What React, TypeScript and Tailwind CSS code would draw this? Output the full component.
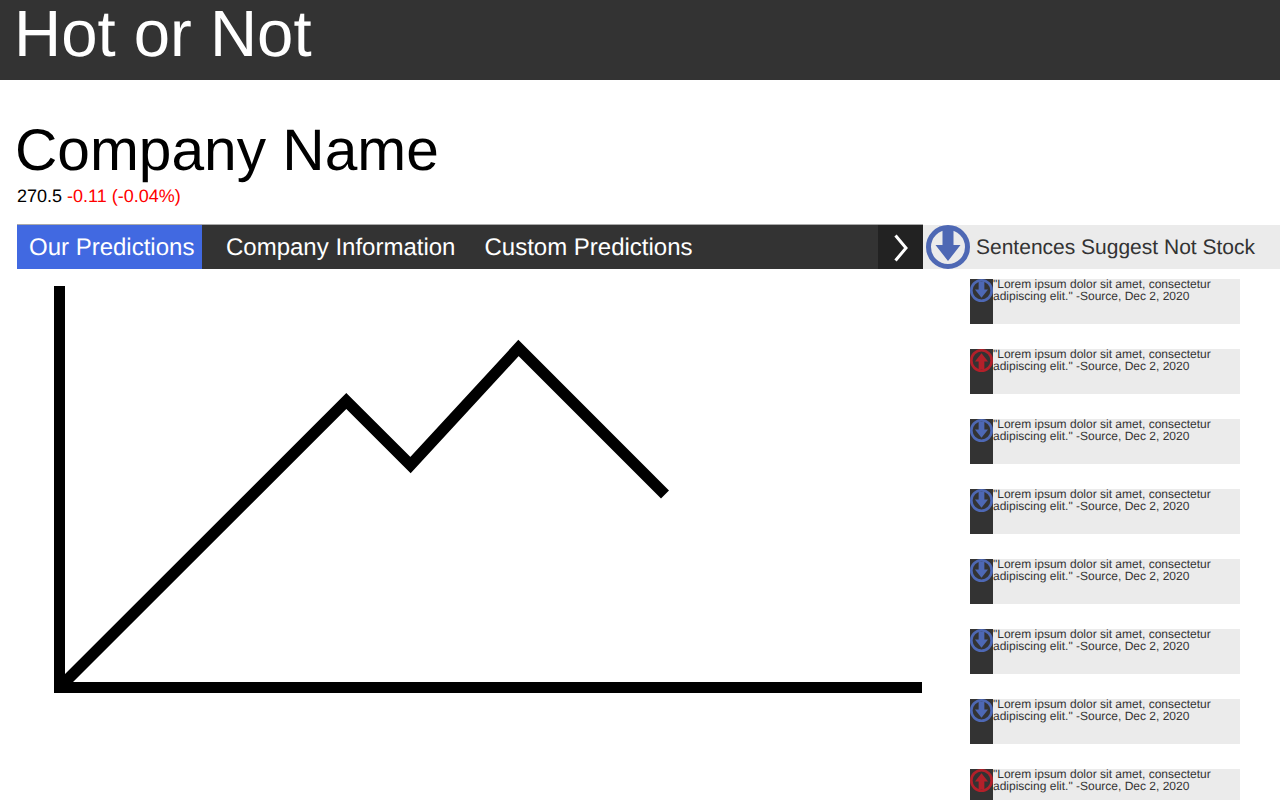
type ArrowProps = {
  up?: boolean;
  className: string;
};

function ArrowCircle({ up, className }: ArrowProps) {
  return (
    <svg viewBox="0 0 44 44" className={className}>
      <circle cx="22" cy="22" r="19.5" fill="none" stroke={up ? '#b3202a' : '#4e68b4'} strokeWidth="5" />
      <path
        d={up ? 'M22 8 L34.5 24 L27.5 24 L27.5 39 L16.5 39 L16.5 24 L9.5 24 Z' : 'M22 36 L34.5 20 L27.5 20 L27.5 5 L16.5 5 L16.5 20 L9.5 20 Z'}
        fill={up ? '#b3202a' : '#4e68b4'}
      />
    </svg>
  );
}

const sentences = [false, true, false, false, false, false, false, true];

function Sentence({ up }: { up: boolean }) {
  return (
    <div className="flex h-[45px] w-[270px] shrink-0 bg-[#ebebeb]">
      <div className="h-full w-[23px] shrink-0 bg-[#333333]">
        <ArrowCircle up={up} className="h-[23px] w-[23px]" />
      </div>
      <p className="-mt-px text-[12px] leading-[12px] text-[#333333]">
        "Lorem ipsum dolor sit amet, consectetur adipiscing elit." -Source, Dec 2, 2020
      </p>
    </div>
  );
}

export default function App() {
  return (
    <div className="h-[800px] overflow-hidden bg-white font-['Liberation_Sans',Arial,sans-serif] [text-rendering:geometricPrecision]">
      <header className="flex h-20 bg-[#333333] pl-[14px]">
        <h1 className="text-[65.3px] leading-[68px] text-white">Hot or Not</h1>
      </header>
      <div className="pl-[15px] pt-[39px]">
        <h2 className="text-[58.67px] leading-[64px] text-black">Company Name</h2>
        <p className="mt-[3px] pl-[2px] text-[18px] leading-[20px] text-black">
          270.5 <span className="text-[#ff0000]">-0.11 (-0.04%)</span>
        </p>
      </div>
      <div className="mt-[18px] flex">
        <div className="ml-[17px] w-[906px] shrink-0">
          <nav className="flex h-[45px] items-center border-t border-[#aaaaaa] bg-[#333333] pt-[2px] text-[24px] leading-none text-white">
            <a className="-mt-[2px] flex h-[44px] w-[185px] items-center bg-[#4169e1] pl-[12px] pt-[2px]">Our Predictions</a>
            <a className="ml-[24px]">Company Information</a>
            <a className="ml-[29px]">Custom Predictions</a>
            <button className="-mt-[2px] ml-auto flex h-[44px] w-[45px] items-center justify-center bg-[#222222] pt-[2px]">
              <svg viewBox="0 0 14 28" className="h-[28px] w-[14px]">
                <path d="M1.5 1.5 L12 14 L1.5 26.5" fill="none" stroke="#ffffff" strokeWidth="3" />
              </svg>
            </button>
          </nav>
          <svg viewBox="0 0 906 430" className="mt-[17px] h-[430px] w-[906px]">
            <path d="M42.5 0 V407 M37 401.5 H905" fill="none" stroke="#000000" strokeWidth="11" />
            <path d="M42 402 L329.3 115 L393.5 179 L501.5 62 L648 208.5" fill="none" stroke="#000000" strokeWidth="11.3" />
          </svg>
        </div>
        <aside className="min-w-0 flex-1">
          <div className="mt-px flex h-[44px] items-center bg-[#ebebeb]">
            <ArrowCircle className="-mt-px ml-[3px] h-[44px] w-[44px] shrink-0" />
            <span className="ml-[6px] pt-[2px] text-[21px] text-[#333333]">Sentences Suggest Not Stock</span>
          </div>
          <div className="ml-[47px] mt-[10px] flex flex-col gap-[25px]">
            {sentences.map((up, i) => (
              <Sentence key={i} up={up} />
            ))}
          </div>
        </aside>
      </div>
    </div>
  );
}
